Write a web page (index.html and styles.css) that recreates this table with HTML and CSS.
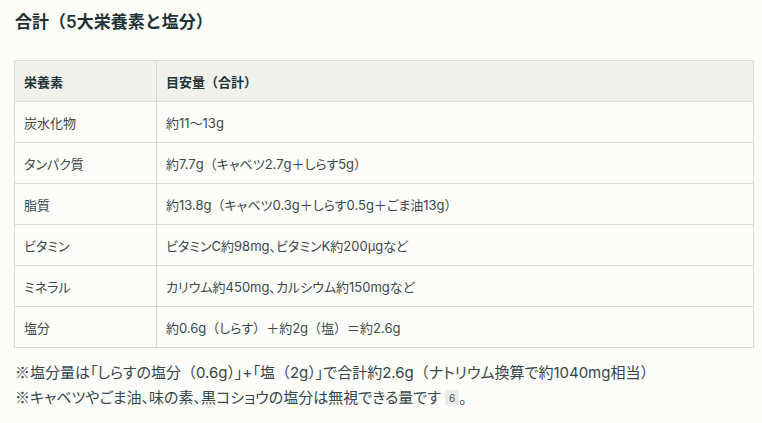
FILE: index.html
```html
<!DOCTYPE html>
<html lang="ja">
<head>
<meta charset="utf-8">
<link rel="stylesheet" href="styles.css">
</head>
<body>
<div class="page">
  <h2 class="title">合計（5大栄養素と塩分）</h2>
  <table class="nutri">
    <thead>
      <tr><th class="c1">栄養素</th><th>目安量<span class="b">（</span>合計<span class="b">）</span></th></tr>
    </thead>
    <tbody>
      <tr><td class="c1">炭水化物</td><td>約11〜13g</td></tr>
      <tr><td class="c1">タンパク質</td><td>約7.7g<span class="b">（</span>キャベツ2.7g＋しらす5g<span class="b">）</span></td></tr>
      <tr><td class="c1">脂質</td><td>約13.8g<span class="b">（</span>キャベツ0.3g＋しらす0.5g＋ごま油13g<span class="b">）</span></td></tr>
      <tr><td class="c1">ビタミン</td><td>ビタミンC約98mg、ビタミンK約200µgなど</td></tr>
      <tr><td class="c1">ミネラル</td><td>カリウム約450mg、カルシウム約150mgなど</td></tr>
      <tr><td class="c1">塩分</td><td>約0.6g<span class="b">（</span>しらす<span class="b">）</span>＋約2g<span class="b">（</span>塩<span class="b">）</span>＝約2.6g</td></tr>
    </tbody>
  </table>
  <p class="note"><span class="k">※</span>塩分量は「しらすの塩分<span class="b">（</span>0.6g<span class="b">）</span>」+「塩<span class="b">（</span>2g<span class="b">）</span>」で合計約2.6g<span class="b">（</span>ナトリウム換算で約1040mg相当<span class="b">）</span><br><span class="k">※</span>キャベツやごま油、味の素、黒コショウの塩分は無視できる量です <span class="cite">6</span>。</p>
</div>
</body>
</html>
```
FILE: styles.css
```css
html, body {
  margin: 0;
  padding: 0;
  background: #fcfcf9;
}
body {
  font-family: Inter, "Noto Sans CJK JP", sans-serif;
  font-feature-settings: "palt";
  color: #34464a;
}
.b {
  font-feature-settings: normal;
}
.k {
  font-family: "Noto Sans CJK JP", sans-serif;
  font-feature-settings: normal;
}
.page {
  padding: 10px 9px 0 14px;
}
.title {
  margin: 0;
  font-size: 17px;
  line-height: 24px;
  font-weight: 600;
  color: #1f3336;
  padding-left: 1px;
  font-feature-settings: normal;
}
.nutri {
  margin-top: 26px;
  width: 740px;
  border-collapse: collapse;
  font-size: 13px;
}
.nutri th, .nutri td {
  border: 1px solid #d9d9d4;
  height: 41px;
  padding: 0 9px;
  text-align: left;
  vertical-align: middle;
  box-sizing: border-box;
}
.nutri th {
  background: #f1f1ec;
  font-weight: 700;
  color: #1f3639;
}
.nutri td {
  color: #3a4a4d;
}
.nutri .c1 {
  width: 142px;
}
.note {
  margin: 12px 0 0 1px;
  font-size: 15px;
  line-height: 24px;
  color: #34464a;
}
.cite {
  display: inline-block;
  background: #ebebe6;
  color: #2a5b7a;
  font-size: 10px;
  line-height: 16px;
  padding: 0 4px;
  border-radius: 4px;
  vertical-align: 1px;
  font-feature-settings: normal;
}
```
